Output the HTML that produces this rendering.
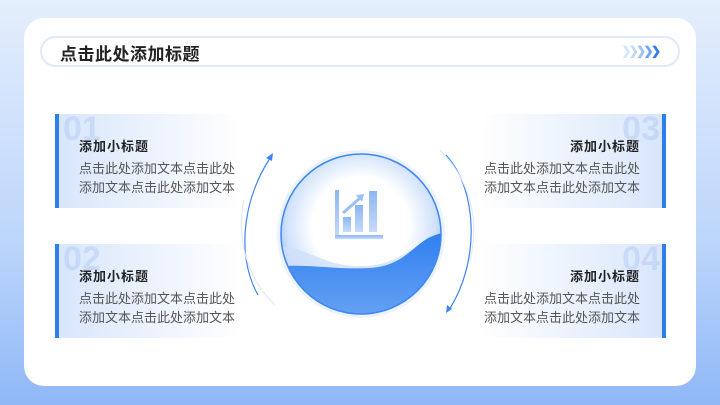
<!DOCTYPE html>
<html><head><meta charset="utf-8"><style>
*{margin:0;padding:0;box-sizing:border-box}
body{width:720px;height:405px;overflow:hidden;background:linear-gradient(180deg,#e4eefc 0%,#bcd5fb 60%,#8fb8f7 100%);font-family:"Liberation Sans","Noto Sans CJK SC",sans-serif;position:relative}
.card{position:absolute;left:24px;top:18px;width:672px;height:368px;background:#fff;border-radius:20px}
.tb{position:absolute;left:40px;top:36px;width:640px;height:31px;border:2px solid #dfeafb;border-radius:16px;background:#fff}
.tb h1{position:absolute;left:18px;top:2px;font-size:17px;font-weight:bold;color:#222;letter-spacing:0.5px}
.arr{position:absolute;right:20px;top:6px;font-size:12px;font-weight:bold;letter-spacing:-3px}
.it{position:absolute;width:186px;height:94px}
.it .n{position:absolute;top:-4px;font-size:34px;font-weight:bold;color:rgba(160,190,240,0.35);font-family:"Liberation Sans",sans-serif}
.it h3{position:absolute;top:22px;font-size:13px;font-weight:bold;color:#222;letter-spacing:1px}
.it p{position:absolute;top:45px;font-size:13px;line-height:19px;color:#555;width:160px;white-space:nowrap}
.L{left:55px;border-left:4px solid #2e7ef0;background:linear-gradient(90deg,#d8e6fb,rgba(255,255,255,0))}
.L .n{left:4px}.L h3,.L p{left:20px}
.R{left:480px;border-right:4px solid #2e7ef0;background:linear-gradient(270deg,#d8e6fb,rgba(255,255,255,0))}
.R .n{right:2px}.R h3{right:22px}.R p{right:22px;text-align:right}
</style></head><body>
<div class="card"></div>
<div class="tb"><h1>点击此处添加标题</h1><div class="arr"><span style="color:#d6e5fb">❯</span> <span style="color:#c0d6fa">❯</span> <span style="color:#9cc0f7">❯</span> <span style="color:#6aa2f2">❯</span> <span style="color:#2e7ef0">❯</span></div></div>
<div class="it L" style="top:114px"><div class="n">01</div><h3>添加小标题</h3><p>点击此处添加文本点击此处<br>添加文本点击此处添加文本</p></div>
<div class="it L" style="top:244px"><div class="n">02</div><h3>添加小标题</h3><p>点击此处添加文本点击此处<br>添加文本点击此处添加文本</p></div>
<div class="it R" style="top:114px"><div class="n">03</div><h3>添加小标题</h3><p>点击此处添加文本点击此处<br>添加文本点击此处添加文本</p></div>
<div class="it R" style="top:244px"><div class="n">04</div><h3>添加小标题</h3><p>点击此处添加文本点击此处<br>添加文本点击此处添加文本</p></div>
<svg width="720" height="405" style="position:absolute;left:0;top:0">
<defs>
<radialGradient id="g" cx="50%" cy="45%" r="55%"><stop offset="0.55" stop-color="#fff"/><stop offset="0.85" stop-color="#cfe1fb"/><stop offset="1" stop-color="#8db8f5"/></radialGradient>
<linearGradient id="w" x1="0" y1="0" x2="0" y2="1"><stop offset="0" stop-color="#2f7ff0"/><stop offset="1" stop-color="#6fa7f4"/></linearGradient>
<clipPath id="c"><circle cx="361" cy="234" r="80"/></clipPath>
<linearGradient id="ic" x1="0" y1="0" x2="0" y2="1"><stop offset="0" stop-color="#8db6f2"/><stop offset="1" stop-color="#c5daf8"/></linearGradient>
</defs>
<circle cx="361" cy="234" r="84" fill="#e4eefc" opacity="0.7"/>
<circle cx="361" cy="234" r="80" fill="url(#g)"/>
<g clip-path="url(#c)">
<path d="M270 245 C300 245 320 262 345 265 C380 270 400 258 420 244 C430 237 440 232 450 232 L450 330 L270 330Z" fill="#cfe0fa" opacity="0.8"/>
<path d="M270 268 C300 262 330 270 370 268 C400 266 410 250 425 240 C435 234 445 232 450 232 L450 330 L270 330Z" fill="url(#w)"/>
</g>
<circle cx="361" cy="234" r="80" fill="none" stroke="#3d88f0" stroke-width="1.5"/>
<g fill="url(#ic)">
<rect x="335" y="190" width="4" height="48"/><rect x="335" y="235" width="48" height="4"/>
<rect x="343" y="217" width="8" height="15"/><rect x="355" y="205" width="8" height="27"/><rect x="369" y="191" width="8" height="41"/>
</g>
<path d="M343 213 L360 198" stroke="#9bbff4" stroke-width="3"/><path d="M356 195 L364 194 L362 202Z" fill="#9bbff4"/>
<path d="M258 295 C238 260 240 205 270 158" fill="none" stroke="#3c86ee" stroke-width="1.2"/>
<path d="M273 153 L266 158 L272 161Z" fill="#3c86ee"/>
<path d="M244 200 C236 240 248 280 275 305" fill="none" stroke="#dde8f7" stroke-width="1"/>
<path d="M446 155 C478 190 480 262 449 310" fill="none" stroke="#3c86ee" stroke-width="1.2"/>
<path d="M446 313 L447 305 L452 309Z" fill="#3c86ee"/>
<path d="M440 150 C470 180 480 220 470 260" fill="none" stroke="#dde8f7" stroke-width="1"/>
</svg>
</body></html>
